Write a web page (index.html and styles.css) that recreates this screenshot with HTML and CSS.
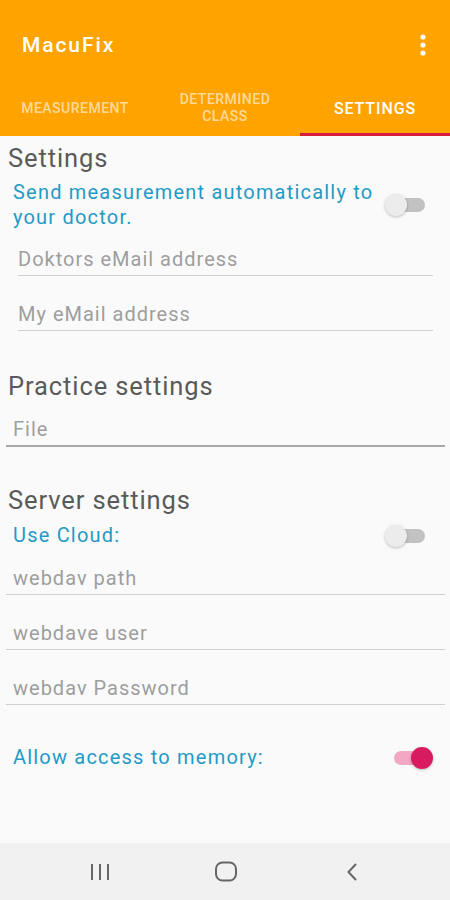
FILE: index.html
```html
<!DOCTYPE html>
<html>
<head>
  <title>MacuFix</title>
  <link rel="stylesheet" href="styles.css">
</head>
<body>
  <div class="screen">
    <div class="appbar">
      <div class="toolbar">
        <span class="title">MacuFix</span>
        <svg class="menu" width="6" height="22" viewBox="0 0 6 22">
          <circle cx="3" cy="3" r="2.6" fill="#fff"/>
          <circle cx="3" cy="11" r="2.6" fill="#fff"/>
          <circle cx="3" cy="19" r="2.6" fill="#fff"/>
        </svg>
      </div>
      <div class="tabs">
        <div class="tab">MEASUREMENT</div>
        <div class="tab">DETERMINED<br>CLASS</div>
        <div class="tab active">SETTINGS</div>
      </div>
    </div>

    <div class="content">
      <h2 class="heading first">Settings</h2>
      <div class="switch-row wrap">
        <span class="label">Send measurement automatically to your doctor.</span>
        <span class="switch"><span class="track"></span><span class="thumb"></span></span>
      </div>
      <div class="field inset">Doktors eMail address</div>
      <div class="field inset">My eMail address</div>

      <h2 class="heading">Practice settings</h2>
      <div class="field wide dark">File</div>

      <h2 class="heading">Server settings</h2>
      <div class="switch-row">
        <span class="label">Use Cloud:</span>
        <span class="switch"><span class="track"></span><span class="thumb"></span></span>
      </div>
      <div class="field wide">webdav path</div>
      <div class="field wide">webdave user</div>
      <div class="field wide">webdav Password</div>

      <div class="switch-row memory">
        <span class="label">Allow access to memory:</span>
        <span class="switch on"><span class="track"></span><span class="thumb"></span></span>
      </div>
    </div>

    <div class="navbar">
      <span class="nav-cell">
        <svg width="18" height="20" viewBox="0 0 18 20">
          <path d="M1 2v16M9 2v16M17 2v16" stroke="#666" stroke-width="2" fill="none"/>
        </svg>
      </span>
      <span class="nav-cell">
        <svg width="24" height="21" viewBox="0 0 24 21">
          <rect x="2" y="1.5" width="20" height="18" rx="6.5" stroke="#666" stroke-width="2" fill="none"/>
        </svg>
      </span>
      <span class="nav-cell">
        <svg width="12" height="20" viewBox="0 0 12 20">
          <path d="M10 2L2.5 10l7.5 8" stroke="#666" stroke-width="2" fill="none"/>
        </svg>
      </span>
    </div>
  </div>
</body>
</html>
```

FILE: styles.css
```css
body {
  margin: 0;
  font-family: Roboto, "Noto Sans", sans-serif;
  background-color: #fafafa;
}

.screen {
  width: 450px;
  height: 900px;
  display: flex;
  flex-direction: column;
  background-color: #fafafa;
}

.appbar {
  background-color: #ffa301;
  height: 136px;
  display: flex;
  flex-direction: column;
}

.toolbar {
  height: 90px;
  display: flex;
  align-items: center;
  justify-content: space-between;
  padding: 0 24px 0 22px;
}

.title {
  color: #fff;
  font-size: 21px;
  font-weight: 500;
  letter-spacing: 1.9px;
}

.tabs {
  height: 46px;
  display: flex;
}

.tab {
  flex: 1;
  display: flex;
  align-items: center;
  justify-content: center;
  text-align: center;
  padding-bottom: 7px;
  font-size: 14px;
  font-weight: 500;
  line-height: 17px;
  letter-spacing: 0.5px;
  color: rgba(255, 255, 255, 0.6);
  border-bottom: 3px solid transparent;
}

.tab.active {
  color: #fff;
  font-size: 16px;
  letter-spacing: 0.9px;
  border-bottom-color: #d81b3c;
}

.content {
  flex: 1;
  display: flex;
  flex-direction: column;
}

.heading {
  margin: 38px 0 0 8px;
  font-size: 25.5px;
  font-weight: 400;
  line-height: 30px;
  letter-spacing: 0.9px;
  color: #5a5a5a;
}
.heading.first {
  margin-top: 7px;
}
.field + .heading {
  margin-top: 40px;
}
.field.dark + .heading {
  margin-top: 38px;
}

.switch-row {
  display: flex;
  align-items: center;
  justify-content: space-between;
  padding: 0 21px 0 13px;
  margin-top: 8px;
}
.switch-row.wrap {
  margin-top: 7px;
}
.switch-row.memory {
  margin-top: 40px;
  padding-right: 17px;
}

.label {
  font-size: 20px;
  line-height: 25px;
  letter-spacing: 1.2px;
  color: #1f9bc6;
  max-width: 372px;
}

.switch {
  position: relative;
  width: 44px;
  height: 24px;
  flex-shrink: 0;
}
.switch .track {
  position: absolute;
  left: 5px;
  top: 5px;
  width: 35px;
  height: 14px;
  border-radius: 7px;
  background-color: #c2c2c2;
}
.switch .thumb {
  position: absolute;
  left: 0;
  top: 1px;
  width: 22px;
  height: 22px;
  border-radius: 50%;
  background-color: #ececec;
  box-shadow: 0 1px 3px rgba(0, 0, 0, 0.25);
}
.switch.on .track {
  background-color: #f2a8c2;
}
.switch.on .thumb {
  left: 22px;
  background-color: #d81b60;
}

.field {
  font-size: 20px;
  line-height: 24px;
  letter-spacing: 1px;
  color: #9e9e9e;
  padding-bottom: 4px;
  border-bottom: 1px solid #cfcfcf;
}
.field.inset {
  margin: 17px 17px 0 18px;
}
.field.inset + .field.inset {
  margin-top: 26px;
}
.field.wide {
  margin: 26px 5px 0 6px;
  padding-left: 7px;
}
.switch-row + .field.wide {
  margin-top: 18px;
}
.heading + .field.wide {
  margin-top: 16px;
}
.field.dark {
  border-bottom: 2px solid #a8a8a8;
}

.navbar {
  height: 57px;
  background-color: #f1f1f1;
  display: flex;
  align-items: center;
  padding-left: 37px;
}

.nav-cell {
  width: 126px;
  display: flex;
  justify-content: center;
  align-items: center;
}
```
